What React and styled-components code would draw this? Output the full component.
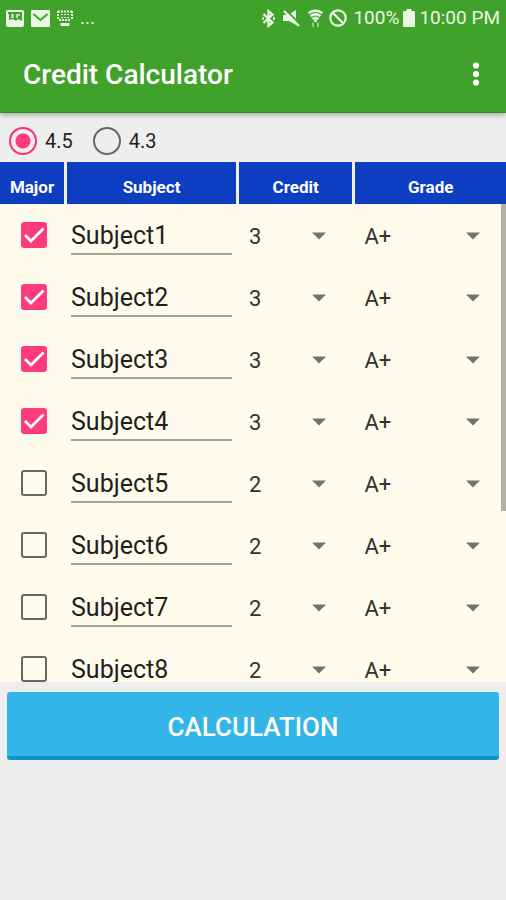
import React, { useState } from 'react';
import styled, { createGlobalStyle } from 'styled-components';

const GlobalStyle = createGlobalStyle`
  * {
    box-sizing: border-box;
  }
  body {
    margin: 0;
    background: #eeeeee;
    font-family: Roboto, 'Liberation Sans', sans-serif;
    color: #1f1f1b;
  }
`

const Header = styled.header`
  position: relative;
  background: #40a22b;
  color: #fff;
  border-bottom: 1px solid #2f9619;
  box-shadow: 0 2px 5px rgba(0, 0, 0, 0.3);
`

const StatusBar = styled.div`
  display: flex;
  align-items: center;
  justify-content: space-between;
  height: 36px;
  padding: 0 6px;
  color: #e9f7e4;
`

const StatusGroup = styled.div`
  display: flex;
  align-items: center;
  gap: ${(props) => props.$gap}px;
`

const StatusText = styled.span`
  font-size: 19px;
  line-height: 36px;
  white-space: nowrap;
`

const Toolbar = styled.div`
  display: flex;
  align-items: center;
  justify-content: space-between;
  height: 76px;
  padding: 0 16px 0 23px;
`

const Title = styled.h1`
  margin: 0;
  padding-top: 2px;
  font-size: 28px;
  line-height: 32px;
  font-weight: 500;
`

const MenuButton = styled.button`
  display: flex;
  padding: 0;
  border: 0;
  background: none;
  color: inherit;
`

const ScaleGroup = styled.div`
  display: flex;
  gap: 20px;
  height: 49px;
  padding: 6px 9px 0;
`

const ScaleLabel = styled.label`
  display: flex;
  align-items: center;
  gap: 8px;
  font-size: 20px;
  line-height: 24px;
`

const Radio = styled.input`
  appearance: none;
  width: 28px;
  height: 28px;
  margin: 0;
  border: 2px solid #666;
  border-radius: 50%;
  &:checked {
    border-color: #ff2d78;
    background: radial-gradient(circle, #ff3b80 7px, transparent 8px);
  }
`

const ListFrame = styled.div`
  position: relative;
`

const ListScroll = styled.div`
  max-height: 520px;
  overflow-y: auto;
  scrollbar-width: none;
  background: #fffbec;
`

const Thumb = styled.div`
  position: absolute;
  right: 0;
  width: 5px;
  background: #b4b1a3;
`

const Table = styled.table`
  width: 100%;
  table-layout: fixed;
  border-spacing: 0;
`

const Col = styled.col`
  width: ${(props) => props.$width};
`

const HeadCell = styled.th`
  position: sticky;
  top: 0;
  z-index: 1;
  height: 42px;
  padding: 8px 0 0;
  background: #0d3dc1;
  border-right: 3px solid #eef0fa;
  color: #fff;
  font-size: 17px;
  line-height: 20px;
  font-weight: 700;
  &:last-child {
    border-right: 0;
  }
`

const Cell = styled.td`
  height: 62px;
  padding: ${(props) => props.$padding};
`

const CheckWrap = styled.label`
  display: grid;
  width: 26px;
  height: 26px;
  & > * {
    grid-area: 1 / 1;
  }
`

const Checkbox = styled.input`
  appearance: none;
  width: 26px;
  height: 26px;
  margin: 0;
  border: 2px solid #69675f;
  border-radius: 3px;
  &:checked {
    border-color: #ff3b80;
    background: #ff3b80;
  }
`

const SubjectInput = styled.input`
  display: block;
  width: 100%;
  height: 40px;
  padding: 2px 0 0;
  border: 0;
  border-bottom: 2px solid #a5a397;
  border-radius: 0;
  outline: 0;
  background: none;
  color: #1f1f1b;
  font-family: inherit;
  font-size: 25px;
`

const SelectWrap = styled.div`
  display: grid;
  align-items: center;
  & > * {
    grid-area: 1 / 1;
  }
  & > svg {
    justify-self: end;
    pointer-events: none;
  }
`

const Select = styled.select`
  appearance: none;
  width: 100%;
  height: 40px;
  padding: 2px 0 0;
  border: 0;
  outline: 0;
  background: none;
  color: #33332e;
  font-family: inherit;
  font-size: 22px;
`

const Actions = styled.div`
  padding: 10px 7px 0;
`

const CalcButton = styled.button`
  display: block;
  width: 100%;
  height: 68px;
  padding: 6px 0 0;
  border: 0;
  border-bottom: 4px solid #0e94c6;
  border-radius: 3px;
  background: #33b5e7;
  color: #fff;
  font-family: inherit;
  font-size: 26px;
  font-weight: 500;
`

const HEAD_HEIGHT = 42
const CREDITS = ['1', '2', '3', '4']
const GRADES = ['A+', 'A0', 'A-', 'B+', 'B0', 'B-', 'C+', 'C0', 'D+', 'D0', 'F']

const initialSubjects = Array.from({ length: 12 }, (_, index) => ({
  name: `Subject${index + 1}`,
  major: index < 4,
  credit: index < 4 ? '3' : '2',
  grade: 'A+'
}))

const PictureIcon = () => (
  <svg width="18" height="17" viewBox="0 0 18 17" aria-hidden="true">
    <rect x="1" y="1" width="16" height="15" rx="1" fill="none" stroke="currentColor" strokeWidth="2" />
    <path d="M2 12V4h1v6l4-1 3 2 2-2 4 2v4H2z" fill="currentColor" />
    <path d="M5 4h3v4H5zM10 4h4v2h-2v2h-2z" fill="currentColor" opacity=".7" />
  </svg>
)

const MailIcon = () => (
  <svg width="19" height="17" viewBox="0 0 19 17" aria-hidden="true">
    <rect width="19" height="17" rx="1" fill="currentColor" />
    <path d="M2.500 4l7 6 7-6" fill="none" stroke="#40a22b" strokeWidth="1.800" />
  </svg>
)

const KeyboardIcon = () => (
  <svg width="16" height="17" viewBox="0 0 16 17" aria-hidden="true" fill="none" stroke="currentColor">
    <path d="M1 1.500h14M2 10h12M1 1v9M15 1v9" strokeWidth="2" strokeDasharray="2 1" />
    <path d="M4 4.500h8M4 7.500h8" strokeDasharray="2 1" />
    <path d="M3.500 14.500h9" strokeWidth="3" />
  </svg>
)

const BluetoothIcon = () => (
  <svg width="13" height="19" viewBox="0 0 13 19" aria-hidden="true" fill="none" stroke="currentColor" strokeWidth="2.300">
    <path d="M1.500 5l9 8.500-4 3.300V2.200l4 3.300-9 8.500" />
    <path d="M0 9.500h2M11 9.500h2" />
  </svg>
)

const MuteIcon = () => (
  <svg width="17" height="18" viewBox="0 0 17 18" aria-hidden="true">
    <path d="M0 6h5l8-5v15l-7-4H0z" fill="currentColor" />
    <path d="M2.500 .5l15 15" stroke="#40a22b" strokeWidth="1.800" />
    <path d="M1 2l15 15" stroke="currentColor" strokeWidth="2.200" />
  </svg>
)

const WifiIcon = () => (
  <svg width="15" height="19" viewBox="0 0 15 19" aria-hidden="true" fill="none" stroke="currentColor">
    <path d="M.5 4q7-4.500 14 0M2.500 7q5-3.500 10 0M4.500 10q3-2.500 6 0" strokeWidth="2.300" />
    <path d="M7.500 9v4" strokeWidth="2.500" />
    <path d="M5 13.500v4.500M10 13.500v4.500" strokeWidth="1.600" opacity=".6" />
  </svg>
)

const BlockIcon = () => (
  <svg width="18" height="18" viewBox="0 0 18 18" aria-hidden="true" fill="none" stroke="currentColor" strokeWidth="2.200">
    <circle cx="9" cy="9" r="7.700" />
    <path d="M3.500 3.500l11 11" />
  </svg>
)

const BatteryIcon = () => (
  <svg width="12" height="18" viewBox="0 0 12 18" aria-hidden="true">
    <path d="M3.500 0h5v2H11a1 1 0 0 1 1 1v14a1 1 0 0 1-1 1H1a1 1 0 0 1-1-1V3a1 1 0 0 1 1-1h2.500z" fill="currentColor" />
  </svg>
)

const MoreIcon = () => (
  <svg width="28" height="28" viewBox="0 0 28 28" aria-hidden="true" fill="currentColor">
    <circle cx="14" cy="5.500" r="3.100" />
    <circle cx="14" cy="14" r="3.100" />
    <circle cx="14" cy="22.500" r="3.100" />
  </svg>
)

const CheckIcon = () => (
  <svg width="26" height="26" viewBox="0 0 26 26" aria-hidden="true" pointerEvents="none">
    <path d="M4 13l6 6L22.500 6.500" fill="none" stroke="#fff" strokeWidth="2.800" />
  </svg>
)

const ArrowIcon = () => (
  <svg width="14" height="10" viewBox="0 0 14 10" aria-hidden="true">
    <path d="M0 2.500h14l-7 7z" fill="#74726a" />
  </svg>
)

const Dropdown = ({ label, value, options, onChange }) => (
  <SelectWrap>
    <Select aria-label={label} value={value} onChange={(e) => onChange(e.target.value)}>
      {options.map((option) => (
        <option key={option} value={option}>{option}</option>
      ))}
    </Select>
    <ArrowIcon />
  </SelectWrap>
)

const SubjectRow = ({ subject, onChange }) => (
  <tr>
    <Cell $padding="0 0 0 21px">
      <CheckWrap>
        <Checkbox
          type="checkbox"
          aria-label={`${subject.name} major`}
          checked={subject.major}
          onChange={(e) => onChange({ major: e.target.checked })}
        />
        {subject.major && <CheckIcon />}
      </CheckWrap>
    </Cell>
    <Cell $padding="0 7px 0 4px">
      <SubjectInput
        type="text"
        aria-label="Subject name"
        value={subject.name}
        onChange={(e) => onChange({ name: e.target.value })}
      />
    </Cell>
    <Cell $padding="0 29px 0 10px">
      <Dropdown
        label={`${subject.name} credit`}
        value={subject.credit}
        options={CREDITS}
        onChange={(credit) => onChange({ credit })}
      />
    </Cell>
    <Cell $padding="0 26px 0 9px">
      <Dropdown
        label={`${subject.name} grade`}
        value={subject.grade}
        options={GRADES}
        onChange={(grade) => onChange({ grade })}
      />
    </Cell>
  </tr>
)

const App = () => {
  const [scale, setScale] = useState('4.5')
  const [subjects, setSubjects] = useState(initialSubjects)
  const [scroll, setScroll] = useState({ top: 0, ratio: 478 / 744 })

  const updateSubject = (index, changes) => {
    setSubjects(subjects.map((subject, i) => (
      i === index ? { ...subject, ...changes } : subject
    )))
  }

  const handleScroll = (e) => {
    const { scrollTop, scrollHeight, clientHeight } = e.target
    const ratio = (clientHeight - HEAD_HEIGHT) / (scrollHeight - HEAD_HEIGHT)
    setScroll({ top: scrollTop * ratio, ratio })
  }

  return (
    <>
      <GlobalStyle />
      <Header>
        <StatusBar>
          <StatusGroup $gap={7}>
            <PictureIcon />
            <MailIcon />
            <KeyboardIcon />
            <StatusText>...</StatusText>
          </StatusGroup>
          <StatusGroup $gap={6}>
            <StatusGroup $gap={8}>
              <BluetoothIcon />
              <MuteIcon />
              <WifiIcon />
            </StatusGroup>
            <BlockIcon />
            <StatusGroup $gap={4}>
              <StatusText>100%</StatusText>
              <BatteryIcon />
              <StatusText>10:00 PM</StatusText>
            </StatusGroup>
          </StatusGroup>
        </StatusBar>
        <Toolbar>
          <Title>Credit Calculator</Title>
          <MenuButton type="button" aria-label="More options">
            <MoreIcon />
          </MenuButton>
        </Toolbar>
      </Header>

      <main>
        <ScaleGroup role="radiogroup" aria-label="Grade scale">
          {['4.5', '4.3'].map((value) => (
            <ScaleLabel key={value}>
              <Radio
                type="radio"
                name="scale"
                value={value}
                checked={scale === value}
                onChange={() => setScale(value)}
              />
              {value}
            </ScaleLabel>
          ))}
        </ScaleGroup>

        <ListFrame>
          <ListScroll onScroll={handleScroll}>
            <Table>
              <colgroup>
                <Col $width="67px" />
                <Col $width="34%" />
                <Col $width="23%" />
                <Col $width="auto" />
              </colgroup>
              <thead>
                <tr>
                  <HeadCell>Major</HeadCell>
                  <HeadCell>Subject</HeadCell>
                  <HeadCell>Credit</HeadCell>
                  <HeadCell>Grade</HeadCell>
                </tr>
              </thead>
              <tbody>
                {subjects.map((subject, index) => (
                  <SubjectRow
                    key={index}
                    subject={subject}
                    onChange={(changes) => updateSubject(index, changes)}
                  />
                ))}
              </tbody>
            </Table>
          </ListScroll>
          <Thumb style={{ top: HEAD_HEIGHT + scroll.top, height: scroll.ratio * 478 }} />
        </ListFrame>

        <Actions>
          <CalcButton type="button">CALCULATION</CalcButton>
        </Actions>
      </main>
    </>
  )
}

export default App;
